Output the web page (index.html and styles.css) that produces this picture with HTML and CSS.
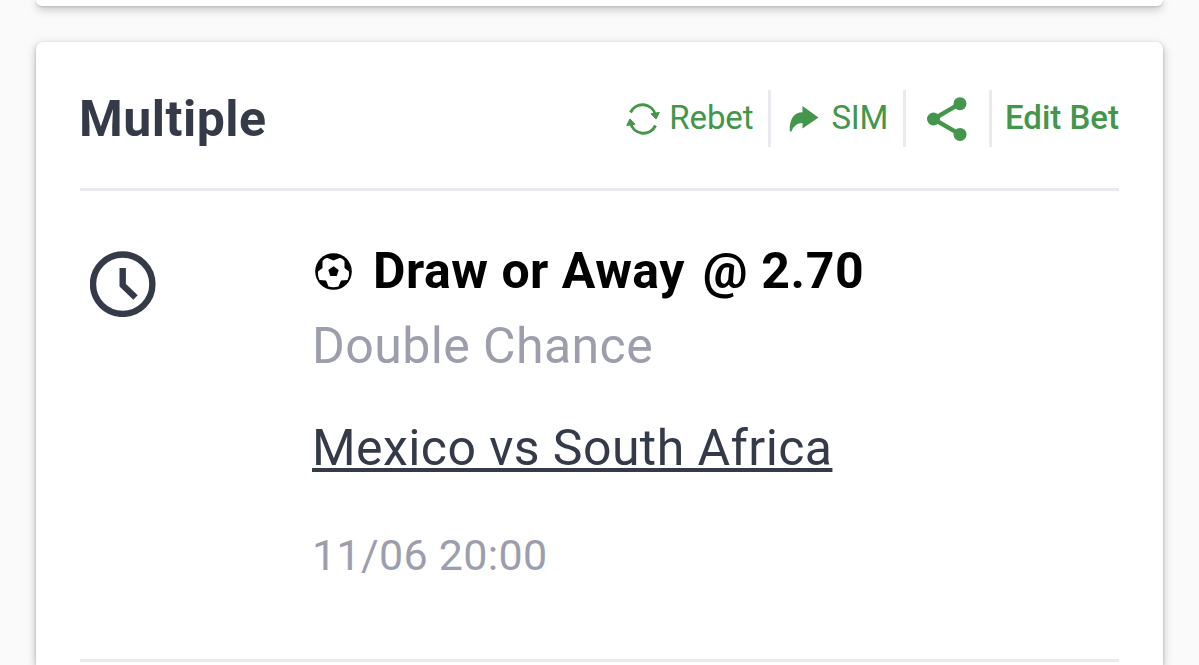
FILE: index.html
```
<!DOCTYPE html>
<html lang="en">
<head>
  <meta charset="UTF-8">
  <title>My Bets</title>
  <link rel="stylesheet" href="styles.css">
</head>
<body>

  <div class="card card-prev"></div>

  <div class="card">
    <div class="card-header">
      <h1>Multiple</h1>
      <div class="actions">
        <a class="action rebet">
          <svg width="34" height="32" viewBox="0 0 34 32">
            <g fill="none" stroke="currentColor" stroke-width="3">
              <path d="M4.5 9.5A13.3 13.3 0 0 1 29.5 12"/>
              <path d="M29.5 22.5A13.3 13.3 0 0 1 4.5 20"/>
            </g>
            <path d="M25 10.800l8.300-1.400-3.200 6.600zM9 21.200L.7 22.600l3.200-6.600z" fill="currentColor" stroke="currentColor" stroke-width="1"/>
          </svg>
          <span>Rebet</span>
        </a>
        <a class="action sim">
          <svg width="30" height="26" viewBox="0 0 30 26">
            <path d="M13.5 0L29.5 11.5 13.5 22.5V17C8 17 4.500 20 2.500 25.500Q.8 26 .7 24.500C.5 13 5 6.500 13.500 6.300Z" fill="currentColor"/>
          </svg>
          <span>SIM</span>
        </a>
        <a class="action share">
          <svg width="40" height="44" viewBox="0 0 40 44">
            <path d="M33 6.700L6.500 22 33 37.400" fill="none" stroke="currentColor" stroke-width="4.400"/>
            <g fill="currentColor">
              <circle cx="33" cy="6.700" r="6.500"/>
              <circle cx="6.500" cy="22" r="6.500"/>
              <circle cx="33" cy="37.400" r="6.500"/>
            </g>
          </svg>
        </a>
        <a class="action edit"><span>Edit Bet</span></a>
      </div>
    </div>

    <div class="selection">
      <div class="status">
        <svg width="66" height="66" viewBox="0 0 66 66" fill="none" stroke="currentColor">
          <circle cx="32.700" cy="33.200" r="29.700" stroke-width="6.400"/>
          <path d="M32.700 17V34.200L45.500 46.500" stroke-width="6.400"/>
        </svg>
      </div>
      <div class="details">
        <div class="pick">
          <svg class="ball" width="37" height="37" viewBox="0 0 37 37">
            <circle cx="18.500" cy="18.500" r="18.300"/>
            <path class="ball-light" d="M7.500 8Q10 4.500 12.500 5L18.500 7.500 24.500 5Q27 4.500 29.500 8L29.500 15 34 18.500Q34.500 23 32.500 27L26 27.500 23.500 33.500Q18.500 35 13.500 33.500L11 27.500 4.500 27Q2.500 23 3 18.500L7.500 15Z"/>
            <path d="M18.500 13.200L23.700 17 21.700 23H15.300L13.300 17Z"/>
          </svg>
          <span>Draw or Away <span class="odds">@ 2.70</span></span>
        </div>
        <div class="market">Double Chance</div>
        <div><a class="event">Mexico vs South Africa</a></div>
        <div class="date">11/06 20:00</div>
      </div>
    </div>
  </div>

</body>
</html>
```
FILE: styles.css
```
* {
  box-sizing: border-box;
}

html {
  overflow: hidden;
}

body {
  display: flex;
  flex-direction: column;
  gap: 36px;
  margin: 0;
  height: 665px;
  overflow: hidden;
  background: #fafafa;
  font-family: Roboto, "Liberation Sans", sans-serif;
  color: #353a48;
}

.card {
  flex: 1;
  width: 1127px;
  margin-left: 36px;
  padding: 0 44px;
  background: #fff;
  border-radius: 7px 7px 0 0;
  box-shadow: 0 3px 10px rgba(0, 0, 0, 0.26), 0 1px 3px rgba(0, 0, 0, 0.18);
}

/* bottom edge of the previous bet */
.card-prev {
  flex: none;
  height: 6px;
  border-radius: 0 0 7px 7px;
}

.card-header {
  display: flex;
  align-items: center;
  justify-content: space-between;
  height: 149px;
  padding-top: 7px;
  border-bottom: 3px solid #e9eaef;
}

h1 {
  margin: 0 0 0 -1px;
  font-size: 50px;
  font-weight: 700;
  line-height: 58px;
  letter-spacing: 0.5px;
}

.actions {
  display: flex;
  color: #43964a;
  font-size: 33px;
}

.action {
  display: flex;
  align-items: center;
  height: 57px;
  line-height: 55px;
  white-space: nowrap;
  border-right: 3px solid #e9eaef;
}

.action span {
  height: 57px;
}

.rebet {
  gap: 9px;
  padding-right: 15px;
  letter-spacing: -0.1px;
}

.sim {
  gap: 12px;
  padding: 0 15px 0 18px;
  letter-spacing: -0.3px;
}

.share {
  padding: 0 22px 0 21px;
}

.edit {
  padding-left: 13px;
  border-right: none;
  font-weight: 500;
}

/* selection */
.selection {
  display: flex;
  height: 471px;
  border-bottom: 3px solid #e9eaef;
}

.status {
  flex: none;
  width: 232px;
  padding: 60px 0 0 10px;
}

.details {
  padding-top: 43px;
  font-size: 50px;
  line-height: 75px;
  letter-spacing: 0.42px;
  white-space: nowrap;
}

.pick {
  display: flex;
  align-items: center;
  gap: 21px;
  padding-left: 3px;
  color: #000;
  font-weight: 700;
  letter-spacing: 0.5px;
}

.odds {
  margin-left: 5px;
  letter-spacing: 0.6px;
}

.ball-light {
  fill: #fff;
}

.market {
  margin-bottom: 27px;
  color: #9c9eac;
}

.event {
  text-decoration: underline;
  text-decoration-thickness: 4px;
  text-decoration-skip-ink: none;
  text-underline-offset: 3px;
}

.date {
  margin-top: 32px;
  color: #9c9eac;
  font-size: 43px;
  letter-spacing: 0.3px;
}
```
